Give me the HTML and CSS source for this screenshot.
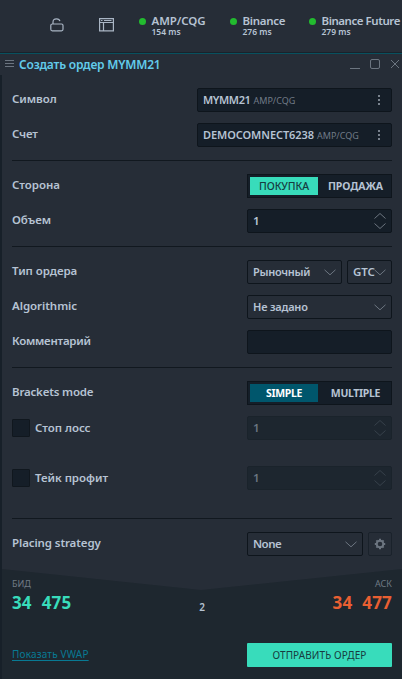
FILE: index.html
```html
<!DOCTYPE html>
<html lang="ru">
<head>
<meta charset="utf-8">
<title>Создать ордер MYMM21</title>
<link rel="stylesheet" href="styles.css">
</head>
<body>
<header class="topbar">
  <svg class="lock" width="14" height="14" viewBox="0 0 14 14"><path d="M3 6V4.200Q3 .8 6.500.8q3 0 3.400 2.400M2 6h9.500q1.500 0 1.500 1.500v3.800q0 1.500-1.500 1.500H2.300q-1.500 0-1.500-1.500V7.500Q.8 6 2.300 6z"/></svg>
  <svg class="layout" width="15" height="14" viewBox="0 0 15 14"><path d="M.6 .6h13.800v12.300H.6zM.6 4.500h13.800M4.500 4.500v8.400M2 2.500h1.500M5 2.500h7.500"/></svg>
  <div class="feeds">
    <div class="feed feed-amp"><i></i><div><b>AMP/CQG</b><small>154 ms</small></div></div>
    <div class="feed feed-bin"><i></i><div><b>Binance</b><small>276 ms</small></div></div>
    <div class="feed feed-fut"><i></i><div><b>Binance Future</b><small>279 ms</small></div></div>
  </div>
</header>
<main class="window">
  <div class="titlebar">
    <svg width="9" height="8" viewBox="0 0 9 8"><path d="M0 .5h9M0 3.500h9M0 6.500h9"/></svg>
    <h1>Создать ордер MYMM21</h1>
    <svg class="controls" width="50" height="12" viewBox="0 0 50 12"><path d="M0 10.500h10M41 2l8 8M49 2l-8 8"/><rect x="20.500" y="1.500" width="9" height="9" rx="1.500"/></svg>
  </div>
  <div class="form">
    <section>
      <div class="row"><label class="t-symbol">Символ</label><div class="box wide"><b class="t-mymm">MYMM21</b><em>AMP/CQG</em><span class="dots"></span></div></div>
      <div class="row"><label class="t-account">Счет</label><div class="box wide"><b class="t-demo">DEMOCOMNECT6238</b><em>AMP/CQG</em><span class="dots"></span></div></div>
    </section>
    <section>
      <div class="row"><label class="t-side">Сторона</label><div class="box toggle"><span class="buy">ПОКУПКА</span><span class="sell">ПРОДАЖА</span></div></div>
      <div class="row"><label class="t-volume">Объем</label><div class="box"><b>1</b><svg class="step" width="12" height="18" viewBox="0 0 12 18"><path d="M.5 6.500L6 1.500l5.500 5M.5 11.500l5.500 5 5.500-5"/></svg></div></div>
    </section>
    <section>
      <div class="row"><label class="t-type">Тип ордера</label><div class="pair"><div class="box select"><b class="t-market">Рыночный</b><svg class="chev" width="12" height="7" viewBox="0 0 12 7"><path d="M.5 .8L6 5.800 11.500.8"/></svg></div><div class="box select gtc"><b>GTC</b><svg class="chev" width="12" height="7" viewBox="0 0 12 7"><path d="M.5 .8L6 5.800 11.500.8"/></svg></div></div></div>
      <div class="row"><label class="t-algo">Algorithmic</label><div class="box select"><b class="t-unset">Не задано</b><svg class="chev" width="12" height="7" viewBox="0 0 12 7"><path d="M.5 .8L6 5.800 11.500.8"/></svg></div></div>
      <div class="row"><label class="t-comment">Комментарий</label><div class="box"></div></div>
    </section>
    <section class="brackets">
      <div class="row"><label class="t-brackets">Brackets mode</label><div class="box toggle mode"><span class="simple">SIMPLE</span><span class="multiple">MULTIPLE</span></div></div>
      <div class="row"><div class="check"><i></i><label class="t-stop">Стоп лосс</label></div><div class="box disabled"><b>1</b><svg class="step" width="12" height="18" viewBox="0 0 12 18"><path d="M.5 6.500L6 1.500l5.500 5M.5 11.500l5.500 5 5.500-5"/></svg></div></div>
      <div class="row take"><div class="check"><i></i><label class="t-take">Тейк профит</label></div><div class="box disabled"><b>1</b><svg class="step" width="12" height="18" viewBox="0 0 12 18"><path d="M.5 6.500L6 1.500l5.500 5M.5 11.500l5.500 5 5.500-5"/></svg></div></div>
    </section>
    <section>
      <div class="row"><label class="t-placing">Placing strategy</label><div class="pair place"><div class="box select"><b class="t-none">None</b><svg class="chev" width="12" height="7" viewBox="0 0 12 7"><path d="M.5 .8L6 5.800 11.500.8"/></svg></div><div class="box gear"><svg width="12" height="12" viewBox="-6 -6 12 12"><circle r="3.300"/><path d="M0-3.800V-5.200M0 3.800V5.200M-3.800 0H-5.200M3.800 0H5.200M2.700 2.700l.9.9M-2.700 2.700l-.9.9M2.700-2.700l.9-.9M-2.700-2.700l-.9-.9"/></svg></div></div></div>
    </section>
  </div>
  <footer>
    <div class="captions"><span class="t-bid">БИД</span><span class="t-ask">АСК</span></div>
    <div class="prices"><strong class="bid">34<span>475</span></strong><span class="spread">2</span><strong class="ask">34<span>477</span></strong></div>
    <div class="actions"><a>Показать VWAP</a><button><span>ОТПРАВИТЬ ОРДЕР</span></button></div>
  </footer>
</main>
</body>
</html>
```
FILE: styles.css
```css
* { box-sizing: border-box; }
body { margin: 0; width: 402px; height: 679px; overflow: hidden; background: #262d37; color: #b6c3d3; font: 500 12px/16px "Noto Sans", "Open Sans", sans-serif; }
svg { fill: none; stroke: #6c7580; stroke-width: 1; flex: none; }
b { font-weight: 600; }
label, b, small, span, h1, em, a { white-space: nowrap; }
.topbar { height: 53px; border-bottom: 1px solid #19222b; display: flex; overflow: hidden; }
.topbar > svg { stroke: #a9b5c4; stroke-width: 1.2; }
.lock { margin: 18px 0 0 50px; }
.layout { margin: 18px 0 0 35px; }
.feeds { display: flex; margin: 13px 0 0 25px; }
.feed { display: flex; flex: none; }
.feed i { width: 7px; height: 7px; margin: 5px 5.500px 0 0; border-radius: 50%; background: #22bb2f; }
.feed b, .feed small { display: block; }
.feed b { font-size: 11.500px; line-height: 16px; font-weight: 600; letter-spacing: -.1px; }
.feed small { font-size: 8.500px; line-height: 10px; margin-top: -2px; font-weight: 600; }
.feed-amp { width: 91px; }
.feed-bin { width: 79px; }
.feed-bin b { letter-spacing: -.3px; }
.feed-fut b { letter-spacing: -.45px; }
.window { height: 626px; border-top: 1px solid #08515f; display: flex; flex-direction: column; }
.titlebar { height: 21px; display: flex; align-items: center; padding: 0 3px 0 5px; }
.titlebar h1 { margin: 0 0 0 5px; font: 600 12px/20px "Noto Sans", sans-serif; letter-spacing: -.2px; color: #62cbea; }
.titlebar svg:first-child { margin-top: -1px; }
.controls { margin: -1px -1px 0 auto; }
.form { border-left: 2px solid #172029; padding: 0 10px; height: 494px; }
section { padding: 13px 0; display: flex; flex-direction: column; gap: 11px; border-bottom: 1px solid #11181f; }
section:last-child { border: 0; }
.brackets { padding-bottom: 28px; }
.take { margin-top: 15px; }
.row { height: 24px; display: flex; justify-content: space-between; }
label { line-height: 22px; font-size: 11.500px; font-weight: 600; letter-spacing: -.05px; }
.t-account { letter-spacing: -.2px; }
.t-comment { letter-spacing: -.25px; }
.t-brackets { letter-spacing: -.18px; }
.t-placing { letter-spacing: -.1px; }
.box { width: 145px; height: 24px; padding: 0 5px; border: 1px solid #0e151c; border-radius: 2px; background: #151e28; display: flex; align-items: center; }
.box b { line-height: 22px; font-size: 11.500px; letter-spacing: -.1px; }
.box .t-mymm { font-size: 11px; letter-spacing: -.4px; }
.box .t-demo { font-size: 11px; letter-spacing: -.07px; }
.box .t-market { font-size: 11px; letter-spacing: -.3px; }
.box .t-unset { font-size: 11px; letter-spacing: -.2px; }
.box .t-none { letter-spacing: -.5px; }
.wide { width: 195px; }
.box em { font-style: normal; font-weight: 400; font-size: 9px; line-height: 18px; margin: 2px 0 0 3px; color: #717b87; }
.dots { width: 2px; height: 10px; margin: 0 6px 0 auto; background: repeating-linear-gradient(#79828d 0 2px, transparent 2px 4px); }
.toggle { padding: 2px; border-radius: 0; }
.toggle span { height: 18px; display: flex; align-items: center; justify-content: center; font-size: 10.500px; }
.toggle span:first-child { width: 68px; }
.toggle span:last-child { width: 71px; font-weight: 700; padding-left: 4px; }
.toggle .sell { letter-spacing: -.1px; }
.toggle .buy { background: #38dcbb; color: #173b40; letter-spacing: -.1px; }
.mode span { letter-spacing: -.33px; }
.toggle .simple { background: #00566c; color: #fff; font-weight: 700; }
.step { margin: 0 0 0 auto; }
.disabled { background: #1d262f; border-color: #1a232b; color: #6b7580; }
.disabled svg { stroke: #37414b; }
.pair { width: 145px; display: flex; justify-content: space-between; }
.pair > .box:first-child { width: 95px; }
.pair > .gtc { width: 45px; padding-right: 5px; }
.gtc b { margin-right: -3px; }
.place > .box:first-child { width: 116px; }
.pair > .gear { width: 24px; padding: 0; justify-content: center; background: transparent; border-color: #1a222b; }
.gear svg { stroke-width: 2; }
.select { background: #262d37; }
.chev { margin-left: auto; }
.check { display: flex; gap: 5px; align-items: center; }
.check i { width: 18px; height: 18px; border: 1px solid #10171e; border-radius: 1px; background: #151e28; }
footer { height: 110px; border-left: 2px solid #172029; padding: 8px 10px 0; background: #1e272f; clip-path: polygon(0 0, 2px 0, 50% 21px, 100% 0, 100% 100%, 0 100%); }
.captions { display: flex; justify-content: space-between; font-size: 9px; line-height: 14px; font-weight: 400; color: #707a85; }
.prices { height: 24px; display: flex; justify-content: space-between; align-items: center; }
.prices strong { font-size: 17px; line-height: 24px; font-weight: 700; letter-spacing: .15px; display: flex; gap: 10px; }
.bid { color: #38dcbb; }
.ask { color: #e95f32; }
.spread { font-size: 10px; font-weight: 600; padding-top: 8px; }
.actions { display: flex; justify-content: space-between; margin-top: 28px; }
.actions a { font-size: 10px; line-height: 23px; font-weight: 400; letter-spacing: .18px; color: #087a94; text-decoration: underline; text-underline-offset: 2px; }
.actions button { width: 145px; height: 24px; padding: 0; border: 0; border-radius: 1px; background: #38dcbb; color: #173b40; font: 400 10px/23px "Noto Sans", sans-serif; letter-spacing: .1px; }
```
